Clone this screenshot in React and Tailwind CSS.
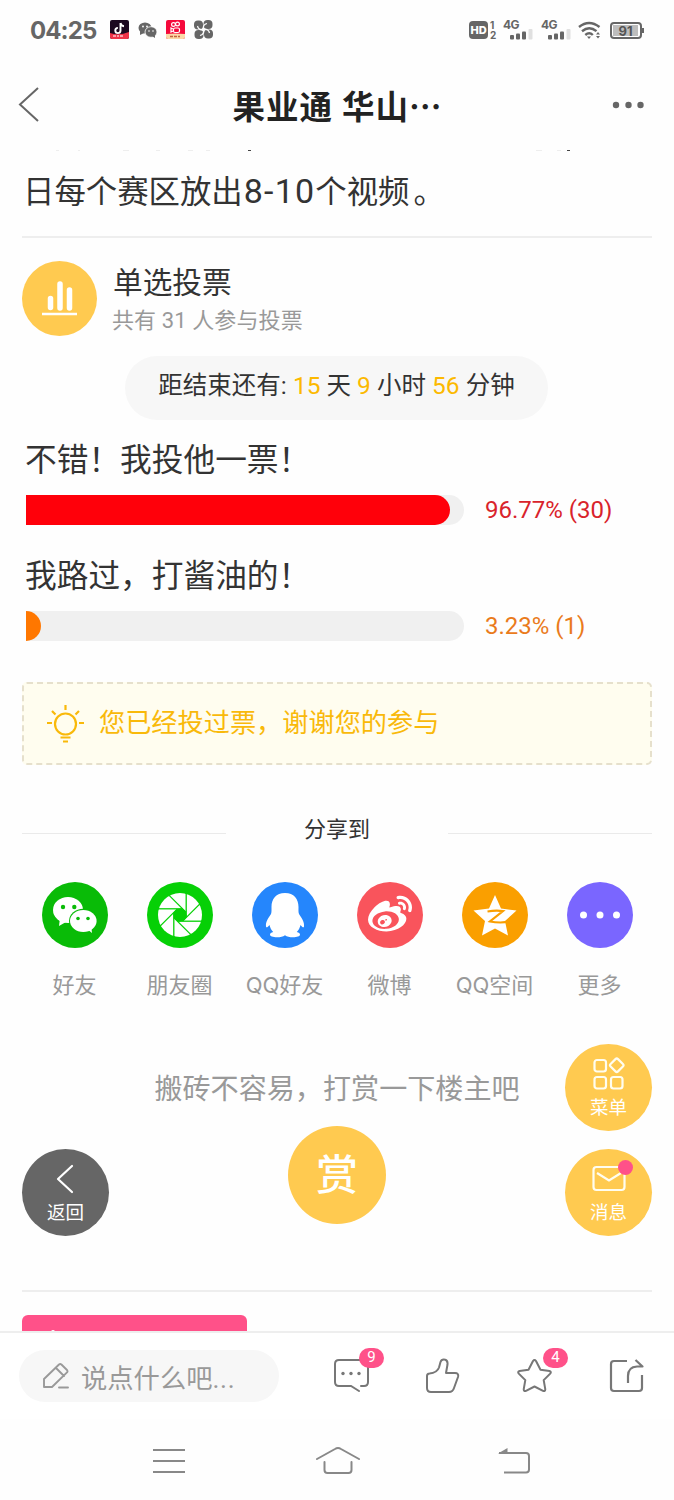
import React from 'react';
import { FaWeibo } from 'react-icons/fa';

const shareItems = [
  { label: '好友', bg: 'bg-[#09bb07]', icon: <WechatIcon /> },
  { label: '朋友圈', bg: 'bg-[#06d006]', icon: <MomentsIcon /> },
  { label: 'QQ好友', bg: 'bg-[#2586fc]', icon: <PenguinIcon /> },
  { label: '微博', bg: 'bg-[#f9545c]', icon: <FaWeibo size={44} color="#fff" /> },
  { label: 'QQ空间', bg: 'bg-[#fa9f00]', icon: <QzoneIcon /> },
  { label: '更多', bg: 'bg-[#7a66ff]', icon: <MoreIcon /> },
];

const options = [
  { title: '不错！我投他一票！', percent: 96.77, text: '96.77% (30)', bar: 'bg-[#ff000a]', color: 'text-[#d9232b]' },
  { title: '我路过，打酱油的！', percent: 3.5, text: '3.23% (1)', bar: 'bg-[#ff7700]', color: 'text-[#ea7b1c]' },
];

function WechatIcon() {
  return (
    <svg width="66" height="66" viewBox="0 0 66 66">
      <path d="M18 36l-1 8 7-4z" fill="#fff" />
      <ellipse cx="26" cy="28" rx="15" ry="13" fill="#fff" />
      <ellipse cx="41.3" cy="39" rx="14.3" ry="12.3" fill="#09bb07" />
      <path d="M45 47l5 4-1-8z" fill="#fff" />
      <ellipse cx="41.3" cy="39" rx="13.3" ry="11" fill="#fff" />
      <g fill="#09bb07">
        <circle cx="21" cy="25" r="2.2" />
        <circle cx="32.3" cy="25" r="2.2" />
        <circle cx="36" cy="36.5" r="1.8" />
        <circle cx="46" cy="36.5" r="1.8" />
      </g>
    </svg>
  );
}

function MomentsIcon() {
  return (
    <svg width="66" height="66" viewBox="-33 -33 66 66">
      <circle r="22" fill="#fff" />
      <circle r="6.600" fill="#06d006" />
      {[0, 45, 90, 135, 180, 225, 270, 315].map((angle) => (
        <path key={angle} transform={`rotate(${angle})`} d="M-23-6.200H2.500" stroke="#06d006" strokeWidth="1.300" />
      ))}
    </svg>
  );
}

function PenguinIcon() {
  return (
    <svg width="66" height="66" viewBox="0 0 66 66" fill="#fff">
      <path d="M33 11C24 11 19.500 17 19.500 25c0 3 .2 5-.5 7-3 4.500-5.500 8-5 12.500.3 1.500 1.500 1 3.500-1.500.7 3 1.900 5 3.700 7-2 .5-3.200 1.400-3.200 2.500 0 2 3 2.700 7 2.700 3.500 0 6-.5 8-2 2 1.500 4.500 2 8 2 4 0 7-.7 7-2.700 0-1.100-1.200-2-3.200-2.500 1.800-2 3-4 3.700-7 2 2.500 3.200 3 3.500 1.500.5-4.500-2-8-5-12.500-.7-2-.5-4-.5-7C46.500 17 42 11 33 11z" />
    </svg>
  );
}

function QzoneIcon() {
  return (
    <svg width="66" height="66" viewBox="0 0 66 66">
      <path d="M33 13l6 13.500 15.500 2-11.500 10.500 3 14.500-13-7-13 7 3-14.500L11.500 28.500l15.500-2z" fill="#fff" />
      <path d="M25.500 29.500c6-1 11-1 15.500-.4L28 39.500c5 1 12 1.500 20 .2" fill="none" stroke="#fa9f00" strokeWidth="2.2" />
    </svg>
  );
}

function MoreIcon() {
  return (
    <svg width="66" height="66" viewBox="0 0 66 66" fill="#fff">
      <circle cx="16.500" cy="33" r="3.500" />
      <circle cx="33" cy="33" r="3.500" />
      <circle cx="49.500" cy="33" r="3.500" />
    </svg>
  );
}

const Signal = () => (
  <div className="relative w-[30px] h-5 mr-2">
    <span className="absolute left-0 top-0 text-[12px] leading-[10px] font-bold tracking-[-0.5px]">4G</span>
    <svg className="absolute left-[7px] top-[9px]" width="23" height="11">
      <rect x="0" y="6" width="4" height="4.500" rx="1" fill="#666" />
      <rect x="6" y="4.500" width="4" height="6" rx="1" fill="#666" />
      <rect x="12" y="2.500" width="4" height="8" rx="1" fill="#666" />
      <rect x="18.500" y="0" width="4" height="10.500" rx="1" fill="#e0e0e0" />
    </svg>
  </div>
);

const StatusBar = () => (
  <div className="h-[60px] flex items-center justify-between pl-[30px] pr-[32px] text-[#666]">
    <div className="flex items-center">
      <span className="w-[80px] text-[24px] leading-6 pt-px font-bold font-['Inter'] tracking-[-0.9px]">04:25</span>
      <svg width="104" height="20" viewBox="0 0 104 20">
        <rect width="19" height="19" rx="2" fill="#1c0820" />
        <path d="M0 13q9 3 19-1v5a2 2 0 0 1-2 2H2a2 2 0 0 1-2-2z" fill="#ee3349" />
        <path d="M10.500 3v7.500a2.600 2.600 0 1 1-2.600-2.600M10.500 3c.3 2 1.500 3 3.500 3.200" fill="none" stroke="#fff" strokeWidth="1.900" />
        <path d="M3 16h3m1 0h2m1 0h3" stroke="#ffc0c8" strokeWidth="1.500" />
        <g fill="#666">
          <ellipse cx="35" cy="8" rx="6.500" ry="5.500" />
          <path d="M30 11l0 4 4-2z" />
          <ellipse cx="41" cy="12" rx="6" ry="5.300" stroke="#fff" strokeWidth=".8" />
          <path d="M42 16l3 2 0-3z" />
        </g>
        <g fill="#fff">
          <circle cx="33" cy="6.500" r=".9" />
          <circle cx="37" cy="6.500" r=".9" />
          <circle cx="39" cy="11" r=".8" />
          <circle cx="43" cy="11" r=".8" />
        </g>
        <rect x="56" width="19" height="19" rx="2" fill="#f5093b" />
        <path d="M56 14q9-1 19 0v3a2 2 0 0 1-2 2H58a2 2 0 0 1-2-2z" fill="#fbd9a8" />
        <path d="M60 16.500h3m1 0h3m1 0h2" stroke="#c3623c" strokeWidth="1.500" />
        <g fill="none" stroke="#fff" strokeWidth="1.200">
          <circle cx="63.500" cy="4.500" r="1.900" />
          <circle cx="67.500" cy="4" r="1.900" />
          <rect x="63.500" y="8" width="6" height="4.500" rx="1.500" />
          <path d="M63 9l-2-1v4l2-1" />
        </g>
        {[0, 90, 180, 270].map((a) => (
          <g key={a} transform={`translate(93.500 9.500) rotate(${a})`}>
            <rect x="0" y="-9.500" width="9" height="9" rx="4" fill="#666" />
            <path d="M0 0Q-1-5 3.500-6" fill="none" stroke="#fefefe" strokeWidth="1.200" />
          </g>
        ))}
      </svg>
    </div>
    <div className="flex items-center font-['Inter']">
      <div className="w-[19px] h-[18px] rounded bg-[#666] text-white text-[11px] leading-[18px] font-extrabold text-center">HD</div>
      <div className="w-[15px] pl-[2px] text-[10px] leading-[10px] font-bold">
        <div>1</div>
        <div>2</div>
      </div>
      <Signal />
      <Signal />
      <svg className="-ml-[1px] mr-[9px]" width="23" height="19" viewBox="0 0 23 19" fill="none" stroke="#666" strokeWidth="2.400">
        <path d="M1 6q10-8 20.500 0M4 10.200q7.300-6 14.500 0M7.300 14q4-3.500 7.500 0" />
        <path d="M9 15.500h4L11 18z" fill="#666" stroke="none" />
        <path d="M18 13.500l2-2.500 2 2.500zM18 15l2 2.500 2-2.500z" fill="#666" stroke="none" />
      </svg>
      <div className="relative w-8 h-[17px] border-2 border-[#666] rounded-[4px] p-px">
        <div className="h-full w-[25px] bg-[#bdbdbd] text-[#555] text-[13px] leading-[12px] font-bold text-center">91</div>
        <div className="absolute -right-[4px] top-[4px] w-[2px] h-[5px] bg-[#666]" />
      </div>
    </div>
  </div>
);

const Header = () => (
  <div className="h-[90px] flex items-center justify-between pl-[18px] pr-[29px]">
    <svg width="80" height="36" viewBox="0 0 80 36" fill="none" stroke="#666" strokeWidth="2">
      <path d="M20 1L2 17.500 20 34" />
    </svg>
    <h1 className="ml-[15px] mt-[2px] text-[32.500px] leading-[40px] tracking-[1px] font-bold text-[#222] whitespace-nowrap">
      果业通 华山<span className="tracking-normal font-['Noto_Sans_CJK_SC']">…</span>
    </h1>
    <svg width="84" height="8" viewBox="0 0 84 8" fill="#666">
      <circle cx="55" cy="4" r="3.200" />
      <circle cx="67.500" cy="4" r="3.200" />
      <circle cx="79.500" cy="4" r="3.200" />
    </svg>
  </div>
);

const VoteOption = ({ title, percent, text, bar, color }) => (
  <div className="h-[116px] pl-[4px]">
    <div className="h-[48px] pt-px -ml-px text-[31.700px] leading-[40px] text-[#333] whitespace-nowrap">{title}</div>
    <div className="mt-[7px] flex items-center">
      <div className="w-[438px] h-[30px] bg-[#f0f0f0] rounded-r-[15px]">
        <div className={`h-full rounded-r-[15px] ${bar}`} style={{ width: `${percent}%` }} />
      </div>
      <span className={`ml-[21px] text-[24px] leading-[30px] ${color}`}>{text}</span>
    </div>
  </div>
);

const FloatButton = ({ label, bg, children }) => (
  <button className={`relative w-[87px] h-[87px] rounded-full flex flex-col items-center text-white ${bg}`}>
    <div className="h-[52px] pt-[9px]">{children}</div>
    <span className="text-[18.500px] leading-6">{label}</span>
  </button>
);

const Badge = ({ children }) => (
  <span className="absolute left-[26px] -top-[10px] w-[25px] h-[20px] rounded-full bg-[#ff5189] text-white text-[15px] leading-[18px] text-center">{children}</span>
);

const BottomBar = () => (
  <div className="h-[88px] border-t-2 border-[#eee] bg-white flex items-center pl-[19px]">
    <div className="w-[260px] h-[52px] rounded-full bg-[#f7f7f7] flex items-center pl-6 text-[#999] text-[26.300px]">
      <svg className="mr-[12px]" width="26" height="28" viewBox="0 0 26 28" fill="none" stroke="#999" strokeWidth="1.900" strokeLinejoin="round" strokeLinecap="round">
        <path d="M1 25v-8L16 2.500q1.200-1 2.400 0l5.600 5.500q1 1.200 0 2.400L9 25zM13 6l8 8M16 25.500h9" />
      </svg>
      <span className="leading-[34px] pt-[5px]">说点什么吧<span className="tracking-[0.7px]">...</span></span>
    </div>
    <div className="flex ml-[54px] gap-[56px] text-[#777]">
      <div className="relative w-9 h-9">
        <svg width="36" height="36" viewBox="0 0 36 36" fill="none" stroke="#777" strokeWidth="2" strokeLinecap="round">
          <path d="M28 28h3q4 0 4-4V6q0-4-4-4H6Q2 2 2 6v18q0 4 4 4h12l8 5" />
          <g fill="#777" stroke="none">
            <circle cx="10" cy="15.500" r="1.700" />
            <circle cx="18" cy="15.500" r="1.700" />
            <circle cx="26" cy="15.500" r="1.700" />
          </g>
        </svg>
        <Badge>9</Badge>
      </div>
      <svg width="36" height="36" viewBox="0 0 36 36" fill="none" stroke="#777" strokeWidth="2" strokeLinejoin="round">
        <path d="M2 18q0-2.500 2.500-2.500 7.500-.5 9.500-6l1.500-5.500q1-3 4-2.500 3.500.5 3 5L21 15h9q4 0 3 4l-4 11q-1.200 4-5 4H6q-4 0-4-4z" />
      </svg>
      <div className="relative w-9 h-9">
        <svg width="36" height="36" viewBox="0 0 36 36" fill="none" stroke="#777" strokeWidth="2" strokeLinejoin="round">
          <path d="M16 3q1.500-2 3 0l4.500 8.700 9 1.300q2.200.8.700 2.600l-6.500 6.500 1.600 9.200q-.1 2.400-2.300 1.600L17.500 28.500 9 32.900q-2.200.8-2.300-1.600l1.600-9.200-6.500-6.500q-1.500-1.800.7-2.600l9-1.300z" />
        </svg>
        <Badge>4</Badge>
      </div>
      <svg width="36" height="36" viewBox="0 0 36 36" fill="none" stroke="#777" strokeWidth="2.200" strokeLinejoin="round">
        <path d="M18 3H5Q2 3 2 6v24q0 3 3 3h25q3 0 3-3V17" />
        <path d="M19 25v-7q0-9 9-9.500h5.500L26.500 2" />
      </svg>
    </div>
  </div>
);

const NavBar = () => (
  <div className="h-[80px] pt-[3px] flex items-center justify-between pl-[153px] pr-[143px]">
    <svg width="32" height="26" stroke="#888" strokeWidth="2">
      <path d="M0 2h32M0 13h32M0 24h32" />
    </svg>
    <svg className="-ml-[8px]" width="44" height="29" viewBox="0 0 44 29" fill="none" stroke="#888" strokeWidth="2" strokeLinecap="round">
      <path d="M1 13L19 3q3-2 6 0l18 10M8.500 16v8q0 3 3 3h21q3 0 3-3v-8" />
    </svg>
    <svg width="33" height="28" viewBox="0 0 33 28" fill="none" stroke="#888" strokeWidth="2">
      <path d="M1 6h27q3 0 3 3v13.500q0 3-3 3H6" />
      <path d="M0 6.500L9.500 1v5.500z" fill="#888" stroke="none" />
    </svg>
  </div>
);

export default function App() {
  return (
    <div className="relative w-[674px] h-[1500px] overflow-hidden bg-[#fefefe] flex flex-col font-['Roboto','Noto_Sans_CJK_SC',sans-serif] text-[#333]">
      <StatusBar />
      <Header />
      <main className="h-[1181px] px-[22px] overflow-hidden">
        {/* tail of the line scrolled under the header */}
        <svg className="block" width="630" height="2">
          <path d="M34 0h3M56 0h2M101 0h6M134 0h4M166 0h5M184 0h4M514 0h6M535 0h4" stroke="#ddd" strokeWidth="1" />
          <path d="M226 0h3M545 0h3" stroke="#444" strokeWidth="2" />
        </svg>
        <p className="h-[86px] pt-[21px] border-b-2 border-[#eee] pl-[1px] text-[31.400px] leading-[40px] whitespace-nowrap">
          日每个赛区放出<span className="ml-px text-[34px] leading-none tracking-[1.2px]">8-10</span>个视频<span className="ml-1">。</span>
        </p>

        <div className="flex pt-[23px]">
          <svg width="75" height="75" viewBox="0 0 75 75">
            <circle cx="37.500" cy="37.500" r="37.500" fill="#ffca50" />
            <path d="M28.500 37.500v9M38 23v24M47.500 29v18" stroke="#fff" strokeWidth="5.500" strokeLinecap="round" />
            <path d="M20 53h35" stroke="#fff" strokeWidth="2.400" />
          </svg>
          <div className="ml-4">
            <div className="text-[29.700px] leading-[40px] mt-[2px]">单选投票</div>
            <div className="-ml-px text-[22px] leading-[30px] mt-[3px] tracking-[0.100px] text-[#999]">共有 31 人参与投票</div>
          </div>
        </div>

        <div className="mt-[20px] ml-[103px] w-[423px] h-[64px] rounded-full bg-[#f7f7f7] text-[24.500px] leading-[60px] text-center whitespace-nowrap">
          距结束还有: <span className="text-[#fcb900]">15</span> 天 <span className="text-[#fcb900]">9</span> 小时 <span className="text-[#fcb900]">56</span> 分钟
        </div>

        <div className="pt-[20px]">
          {options.map((o) => (
            <VoteOption key={o.title} {...o} />
          ))}
        </div>

        <div className="mt-[10px] h-[83px] rounded-[5px] border-2 border-dashed border-[#e6e0cc] bg-[#fffdef] flex items-center pl-[23px] text-[#f9b90a] text-[26.200px]">
          <svg className="mr-[15px]" width="37" height="38" viewBox="0 0 37 38" fill="none" stroke="#f9b90a" strokeWidth="2.200">
            <circle cx="18.500" cy="19" r="10.500" />
            <path d="M18.500 0v5M5 6l3.500 3.500M32 6l-3.500 3.500M0 18h5M32 18h5M13.500 32.500h10M16 36.500h5" />
          </svg>
          <span className="leading-[34px] -mt-px">您已经投过票，谢谢您的参与</span>
        </div>

        <div className="mt-[49px] h-8 flex items-center justify-between">
          <div className="w-[204px] h-px mt-[6px] bg-[#eaeaea]" />
          <span className="text-[22px] leading-8">分享到</span>
          <div className="w-[204px] h-px mt-[6px] bg-[#eaeaea]" />
        </div>

        <div className="mt-[36px] grid grid-cols-6">
          {shareItems.map((item) => (
            <div key={item.label} className="flex flex-col items-center">
              <div className={`ml-px w-[66px] h-[66px] rounded-full flex items-center justify-center ${item.bg}`}>{item.icon}</div>
              <span className="mt-[21px] mb-px text-[22px] leading-8 text-[#999] whitespace-nowrap font-['Inter','Noto_Sans_CJK_SC',sans-serif]">{item.label}</span>
            </div>
          ))}
        </div>

        <div className="mt-[66px] text-[28.100px] leading-[44px] text-center text-[#999]">搬砖不容易，打赏一下楼主吧</div>
        <div className="mt-[14px] mx-auto w-[98px] h-[98px] rounded-full bg-[#ffca50] text-white text-[42px] leading-[100px] text-center font-medium">赏</div>
        <div className="mt-[66px] h-[2px] bg-[#eee]" />
        <div className="mt-[23px] w-[225px] h-[50px] rounded-md bg-[#ff5189]">
          <div className="pt-[15px] pl-[29px]">
            <div className="w-[4px] h-[4px] rounded-full bg-white" />
          </div>
        </div>
      </main>
      <BottomBar />
      <NavBar />

      {/* floating actions */}
      <div className="absolute left-[22px] top-[1149px]">
        <FloatButton label="返回" bg="bg-[#666]">
          <svg width="20" height="36" viewBox="0 0 20 36" fill="none" stroke="#fff" strokeWidth="2.200" strokeLinecap="round" strokeLinejoin="round">
            <path d="M16 8L2 21l14 13" />
          </svg>
        </FloatButton>
      </div>
      <div className="absolute left-[565px] top-[1044px] flex flex-col gap-[18px]">
        <FloatButton label="菜单" bg="bg-[#ffca50]">
          <svg width="32" height="38" viewBox="0 0 32 38" fill="none" stroke="#fffdf0" strokeWidth="2.200">
            <rect x="1.500" y="7" width="11.500" height="11.500" rx="2.500" />
            <rect x="1.500" y="24" width="11.500" height="11.500" rx="2.500" />
            <rect x="18" y="24" width="11.500" height="11.500" rx="2.500" />
            <rect x="18.500" y="7" width="10.500" height="10.500" rx="1.800" transform="rotate(45 23.750 12.250)" />
          </svg>
        </FloatButton>
        <FloatButton label="消息" bg="bg-[#ffca50]">
          <svg width="34" height="38" viewBox="0 0 34 38" fill="none" stroke="#fffdf0" strokeWidth="2.200">
            <rect x="1.500" y="9" width="31" height="23" rx="3" />
            <path d="M5 15l12 7.500L29 15" />
          </svg>
          <span className="absolute left-[53px] top-[11px] w-[15px] h-[15px] rounded-full bg-[#ff5189]" />
        </FloatButton>
      </div>
    </div>
  );
}
